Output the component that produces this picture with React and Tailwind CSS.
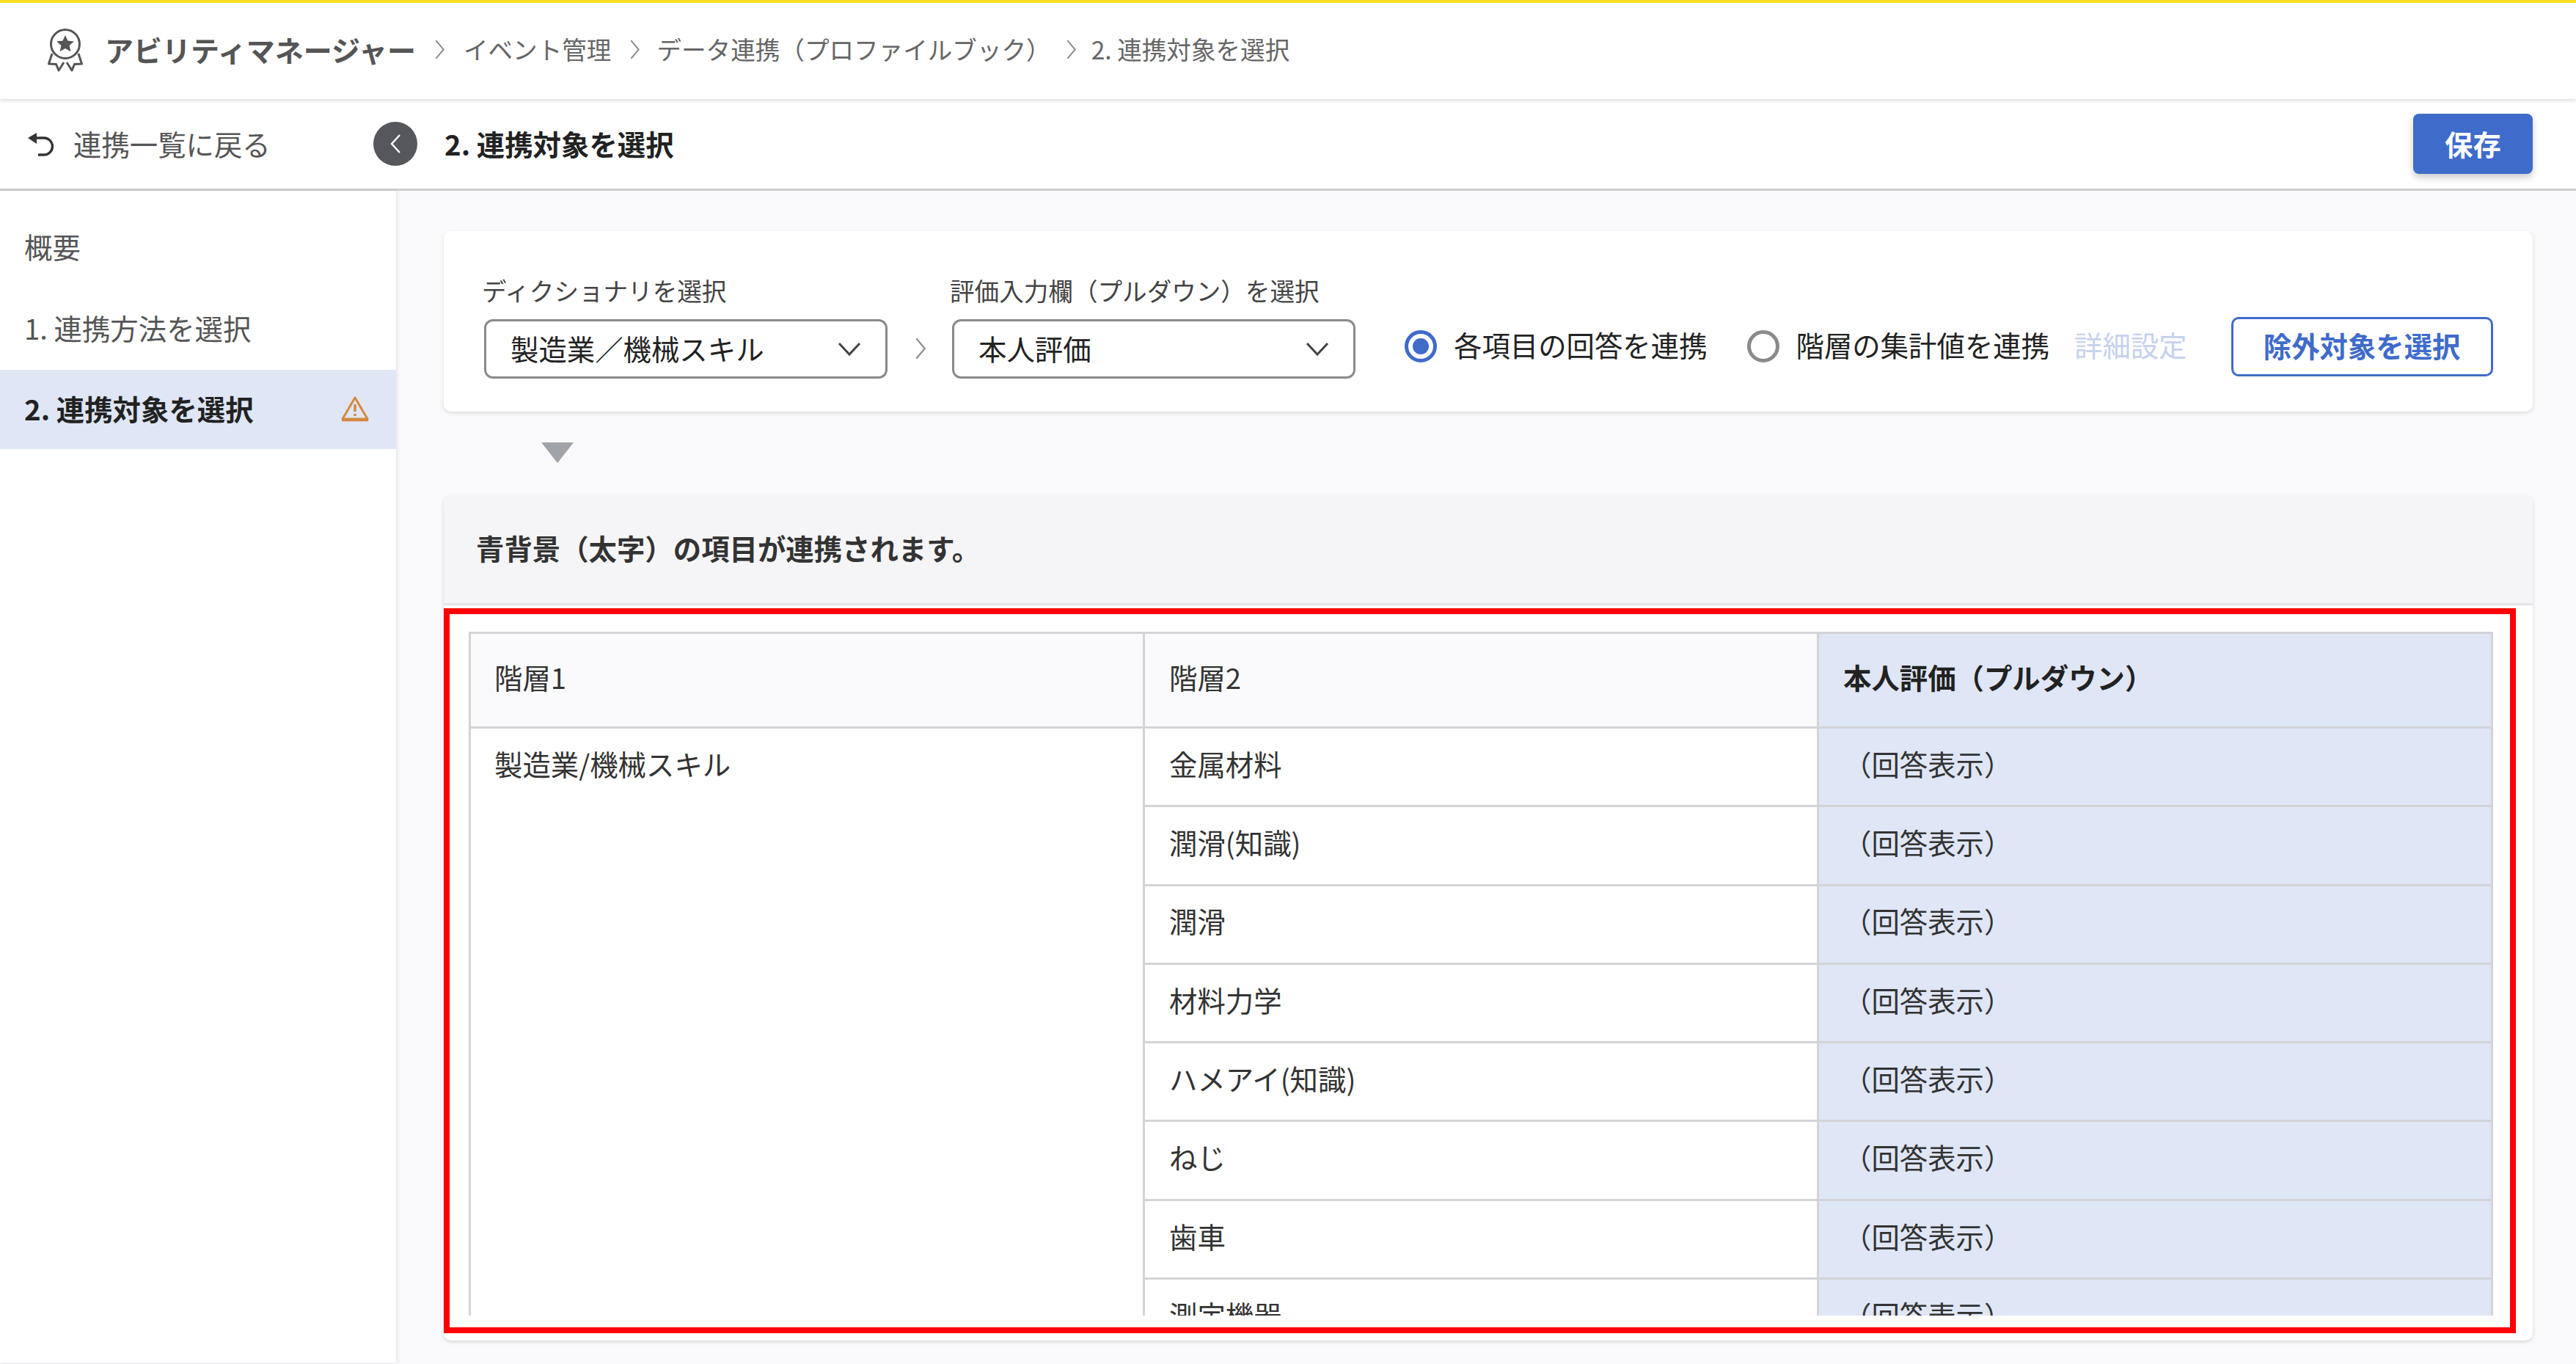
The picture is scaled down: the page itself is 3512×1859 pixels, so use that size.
import React from 'react';

const rows = ['金属材料', '潤滑(知識)', '潤滑', '材料力学', 'ハメアイ(知識)', 'ねじ', '歯車', '測定機器'];

const Logo = () => (
  <svg width="50" height="60" viewBox="0 0 50 60" fill="none" stroke="#555" strokeWidth="3" strokeLinejoin="round" className="shrink-0">
    <circle cx="25" cy="22" r="19.5" />
    <path d="M25 10l3.5 7.6 8.3.9-6.2 5.6 1.8 8.1-7.4-4.2-7.4 4.2 1.8-8.1-6.2-5.6 8.3-.9z" fill="#555" stroke="none" />
    <path d="M7 35L2.5 49l10 .5L16 58l7-11" />
    <path d="M43 35l4.5 14-10 .5L34 58l-7-11" />
  </svg>
);

const Chevron = ({ className }) => (
  <svg width="15" height="29" viewBox="0 0 14 28" fill="none" stroke="#8f8f8f" strokeWidth="2" className={className}>
    <path d="M2 2l10 12L2 26" />
  </svg>
);

const Select = ({ label, value, className }) => (
  <div className={className}>
    <div className="text-[33.6px] leading-[40px] text-[#444] -mt-[2px] mb-[19px] -ml-[3px]">{label}</div>
    <div className="h-[81px] rounded-[12px] border-[3px] border-[#8a8a8a] bg-white flex items-center justify-between pl-[33px] pr-[33px] text-[38.4px] text-[#222]">
      <span className="pb-[2px]">{value}</span>
      <svg width="32" height="20" viewBox="0 0 32 20" fill="none" stroke="#444" strokeWidth="3">
        <path d="M2 2l14 15L30 2" />
      </svg>
    </div>
  </div>
);

const Radio = ({ checked, label }) => (
  <div className="flex items-center gap-[23px]">
    <span className={`w-[44px] h-[44px] rounded-full border-[5px] flex items-center justify-center bg-white ${checked ? 'border-[#3f6bca]' : 'border-[#8a8a8a]'}`}>
      {checked && <span className="w-[22px] h-[22px] rounded-full bg-[#3f6bca]" />}
    </span>
    <span className="text-[38.4px] text-[#222] pb-[6px]">{label}</span>
  </div>
);

export default function App() {
  return (
    <div className="relative w-[3512px] h-[1859px] overflow-hidden bg-[#f9f9fb] border-t-[4px] border-[#ffdd22] font-['Noto_Sans_CJK_JP','Noto_Sans',sans-serif]">
      {/* breadcrumb */}
      <header className="h-[131px] bg-white flex items-center pl-[64px] pb-[4px] shadow-[0_2px_5px_rgba(0,0,0,0.14)] relative z-10 text-[33.6px] text-[#666]">
        <Logo />
        <span className="ml-[29px] text-[39px] font-bold text-[#555]">アビリティマネージャー</span>
        <Chevron className="mx-[25px]" />
        <span>イベント管理</span>
        <Chevron className="ml-[25px] mr-[22px]" />
        <span>データ連携（プロファイルブック）</span>
        <Chevron className="mx-[20px]" />
        <span>2. 連携対象を選択</span>
      </header>

      {/* title row */}
      <div className="h-[125px] bg-white border-b-[3px] border-[#cfcfd1] flex items-center justify-between pr-[59px] relative">
        <div className="flex items-center">
          <div className="w-[509px] pl-[38px] flex items-center gap-[27px] text-[38.4px] text-[#555]">
            <svg width="35" height="34" viewBox="0 0 35 34" fill="none" stroke="#333" strokeWidth="3.4">
              <path d="M0 9L12 2v15z" fill="#333" stroke="none" />
              <path d="M10 9h12a11.5 11.5 0 0 1 0 23h-8" />
            </svg>
            <span>連携一覧に戻る</span>
          </div>
          <div className="w-[60px] h-[60px] rounded-full bg-[#55575c] flex items-center justify-center">
            <svg width="18" height="30" viewBox="0 0 18 30" fill="none" stroke="#fff" strokeWidth="2.4">
              <path d="M15 3L4 15l11 12" />
            </svg>
          </div>
          <span className="ml-[37px] text-[38.4px] font-bold text-[#222]">2. 連携対象を選択</span>
        </div>
        <button className="w-[163px] h-[82px] rounded-[8px] bg-[#3f6bca] text-white text-[38.4px] font-bold shadow-[0_5px_10px_rgba(0,0,0,0.2)]">保存</button>
      </div>

      <div className="flex">
        {/* sidebar */}
        <aside className="w-[540px] h-[1597px] bg-white shadow-[1px_0_4px_rgba(0,0,0,0.1)] pt-[52px] text-[38.4px] text-[#555] relative">
          <div className="h-[56px] flex items-center pl-[33px] pb-[8px]">概要</div>
          <div className="h-[109px] mt-[26px] flex items-center pl-[33px] pb-[4px]">1. 連携方法を選択</div>
          <div className="h-[108px] flex items-center justify-between pl-[33px] pr-[36px] pb-[3px] bg-[#dfe6f6] font-bold text-[#222] mt-[1px]">
            <span>2. 連携対象を選択</span>
            <svg width="40" height="36" viewBox="0 0 40 36" fill="none" stroke="#d5883f" strokeWidth="3" strokeLinejoin="round">
              <path d="M20 3L3 32h34z" />
              <path d="M2 33.5h36" strokeWidth="3.5" />
              <path d="M20 12v10M20 25v3" strokeWidth="3.5" />
            </svg>
          </div>
        </aside>

        {/* main */}
        <main className="flex-1 pl-[65px] pr-[59px] pt-[55px]">
          <section className="h-[246px] bg-white rounded-[10px] shadow-[0_2px_5px_rgba(0,0,0,0.12)] flex items-start pl-[55px] pt-[63px] relative">
            <Select label="ディクショナリを選択" value="製造業／機械スキル" className="w-[550px]" />
            <Chevron className="w-[16px] h-[32px] ml-[37px] mr-[35px] mt-[81px]" />
            <Select label="評価入力欄（プルダウン）を選択" value="本人評価" className="w-[550px]" />
            <div className="flex items-center ml-[67px] mt-[54px] h-[81px]">
              <Radio checked label="各項目の回答を連携" />
              <div className="ml-[54px]"><Radio label="階層の集計値を連携" /></div>
              <span className="ml-[34px] text-[38.4px] text-[#c5d1ee] pb-[6px]">詳細設定</span>
              <button className="ml-[60px] w-[357px] h-[81px] rounded-[10px] border-[3px] border-[#3f6bca] bg-white text-[#3f6bca] text-[38.4px] font-bold pb-[3px]">除外対象を選択</button>
            </div>
          </section>

          <div className="w-0 h-0 ml-[133px] mt-[42px] border-x-[22px] border-x-transparent border-t-[28px] border-t-[#a0a3a8]" />

          <section className="mt-[44px] h-[1152px] bg-white rounded-[10px] shadow-[0_2px_5px_rgba(0,0,0,0.14)] overflow-hidden">
            <div className="h-[150px] bg-[#f5f5f7] border-b-[3px] border-[#e4e4e6] flex items-center pl-[44px] pb-[3px] text-[38.4px] font-bold text-[#333]">
              青背景（太字）の項目が連携されます。
            </div>
            <div className="pt-[36px] pl-[34px] pr-[54px]">
              <div className="h-[932px] overflow-hidden">
                <table className="w-full table-fixed border-collapse text-[38.4px] text-[#333]">
                  <thead>
                    <tr className="h-[129px]">
                      <th className="border-[3px] border-[#d4d4d6] bg-[#fafafc] font-normal text-left pl-[32px] pb-[9px]">階層1</th>
                      <th className="border-[3px] border-[#d4d4d6] bg-[#fafafc] font-normal text-left pl-[33px] pb-[9px]">階層2</th>
                      <th className="border-[3px] border-[#d4d4d6] bg-[#dfe6f6] font-bold text-left pl-[33px] pb-[9px] text-[#222]">本人評価（プルダウン）</th>
                    </tr>
                  </thead>
                  <tbody>
                    {rows.map((row, i) => (
                      <tr key={row} className="h-[107.3px]">
                        {i === 0 && (
                          <td rowSpan={rows.length} className="border-[3px] border-[#d4d4d6] align-top pl-[32px] pt-[19px]">製造業/機械スキル</td>
                        )}
                        <td className="border-[3px] border-[#d4d4d6] pl-[33px] pb-[9px]">{row}</td>
                        <td className="border-[3px] border-[#d4d4d6] bg-[#dfe6f6] pl-[33px] pb-[9px]">（回答表示）</td>
                      </tr>
                    ))}
                  </tbody>
                </table>
              </div>
            </div>
          </section>
        </main>
      </div>

      {/* red annotation box */}
      <div className="absolute left-[605px] top-[825px] w-[2825px] h-[988px] border-[8px] border-[#ff0000] pointer-events-none z-20" />
    </div>
  );
}
